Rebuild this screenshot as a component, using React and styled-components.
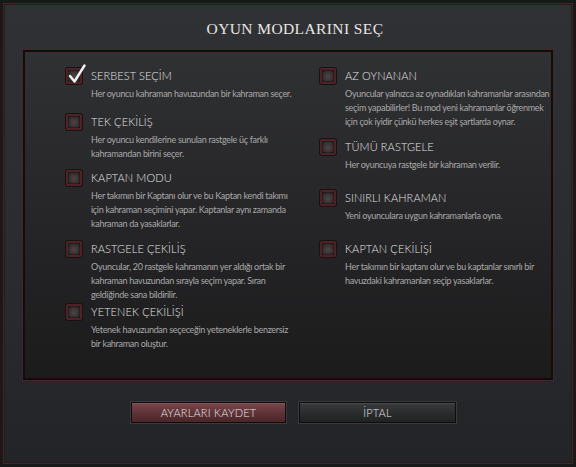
import React from 'react';
import styled, { createGlobalStyle } from 'styled-components';

const GlobalStyle = createGlobalStyle`
  body {
    margin: 0;
    background: #1a1a1b;
    font-family: Lato, "Open Sans", sans-serif;
  }
`;

const Frame = styled.div`
  width: 576px;
  height: 467px;
  box-sizing: border-box;
  padding: 3px;
  background: #19191a;
`;

const Inner = styled.div`
  height: 100%;
  box-sizing: border-box;
  border: 1px solid #4b2327;
  background: linear-gradient(180deg, #303134 0%, #2a2b2e 60%, #232427 100%);
  display: flex;
  flex-direction: column;
  box-shadow: inset 0 0 0 1px #1e1e20;
`;

const Title = styled.h1`
  margin: 0;
  height: 45px;
  display: flex;
  align-items: center;
  justify-content: center;
  padding: 4px 0 0 14px;
  box-sizing: border-box;
  font-family: "Liberation Serif", "DejaVu Serif", serif;
  font-weight: normal;
  font-size: 15.5px;
  letter-spacing: 0.4px;
  color: #e9e7e4;
`;

const Panel = styled.div`
  margin: 0 18px;
  height: 332px;
  box-sizing: border-box;
  border: 1px solid #4a2326;
  box-shadow: inset 0 0 0 2px #0e0e0f;
  background: linear-gradient(180deg, #303133 0%, #262628 50%, #1b1b1c 100%);
  display: grid;
  grid-template-columns: 254px 1fr;
  padding: 18px 0 0 43px;
`;

const Column = styled.div`
  display: flex;
  flex-direction: column;
`;

const Item = styled.div`
  display: grid;
  grid-template-columns: 16px 1fr;
  column-gap: 9px;
  margin-top: ${p => p.$gap || 0}px;
`;

const Box = styled.span`
  position: relative;
  width: 16px;
  height: 16px;
  box-sizing: border-box;
  border: 2px solid #4e2226;
  border-radius: 2px;
  background: radial-gradient(circle at 50% 55%, #4d4445 0%, #2e2728 80%);
  box-shadow: 0 0 0 1px #1a1112, inset 0 0 2px #000;
`;

const Check = styled.svg`
  position: absolute;
  left: 0;
  top: -6px;
`;

const Name = styled.div`
  font-size: 11px;
  font-weight: 300;
  line-height: 16px;
  color: #e2e2e2;
  letter-spacing: 0.1px;
`;

const Desc = styled.p`
  grid-column: 2;
  margin: 3px 0 0;
  font-size: 9px;
  letter-spacing: -0.3px;
  line-height: 14px;
  white-space: nowrap;
  color: #a9a9a9;
`;

const Footer = styled.div`
  flex: 1;
  display: flex;
  justify-content: center;
  align-items: flex-start;
  gap: 13px;
  padding: 21px 0 0 11px;
`;

const Button = styled.button`
  width: ${p => p.$w}px;
  height: 21px;
  border: 1px solid #0d0d0e;
  outline: 1px solid #3a3a3c;
  font-family: Lato, "Open Sans", sans-serif;
  font-size: 11px;
  font-weight: 300;
  color: #e4e4e4;
  letter-spacing: 0.2px;
  padding: 0;
  background: ${p =>
    p.$primary
      ? 'linear-gradient(180deg, #7a474b 0%, #5d3236 55%, #4a2629 100%)'
      : 'linear-gradient(180deg, #3a3b3d 0%, #2a2b2d 55%, #212224 100%)'};
  box-shadow: inset 0 1px 0 rgba(255,255,255,0.08);
`;

const left = [
  { name: 'SERBEST SEÇİM', lines: ['Her oyuncu kahraman havuzundan bir kahraman seçer.'], checked: true },
  { name: 'TEK ÇEKİLİŞ', lines: ['Her oyuncu kendilerine sunulan rastgele üç farklı', 'kahramandan birini seçer.'], gap: 13 },
  { name: 'KAPTAN MODU', lines: ['Her takımın bir Kaptanı olur ve bu Kaptan kendi takımı', 'için kahraman seçimini yapar. Kaptanlar aynı zamanda', 'kahraman da yasaklarlar.'], gap: 9 },
  { name: 'RASTGELE ÇEKİLİŞ', lines: ['Oyuncular, 20 rastgele kahramanın yer aldığı ortak bir', 'kahraman havuzundan sırayla seçim yapar. Sıran', 'geldiğinde sana bildirilir.'], gap: 10 },
  { name: 'YETENEK ÇEKİLİŞİ', lines: ['Yetenek havuzundan seçeceğin yeteneklerle benzersiz', 'bir kahraman oluştur.'], gap: 2 },
];

const right = [
  { name: 'AZ OYNANAN', lines: ['Oyuncular yalnızca az oynadıkları kahramanlar arasından', 'seçim yapabilirler! Bu mod yeni kahramanlar öğrenmek', 'için çok iyidir çünkü herkes eşit şartlarda oynar.'] },
  { name: 'TÜMÜ RASTGELE', lines: ['Her oyuncuya rastgele bir kahraman verilir.'], gap: 10 },
  { name: 'SINIRLI KAHRAMAN', lines: ['Yeni oyunculara uygun kahramanlarla oyna.'], gap: 18 },
  { name: 'KAPTAN ÇEKİLİŞİ', lines: ['Her takımın bir kaptanı olur ve bu kaptanlar sınırlı bir', 'havuzdaki kahramanları seçip yasaklarlar.'], gap: 18 },
];

function Mode({ name, lines, checked, gap }) {
  return (
    <Item $gap={gap}>
      <Box>
        {checked && (
          <Check width="18" height="20" viewBox="0 0 18 20">
            <path d="M2 12 L6.5 17.5 L16.5 1.5" fill="none" stroke="#f2f2f2" strokeWidth="2.4" strokeLinecap="round" strokeLinejoin="round" />
          </Check>
        )}
      </Box>
      <Name>{name}</Name>
      <Desc>
        {lines.map((l, i) => (
          <React.Fragment key={i}>
            {i > 0 && <br />}
            {l}
          </React.Fragment>
        ))}
      </Desc>
    </Item>
  );
}

export default function App() {
  return (
    <Frame>
      <GlobalStyle />
      <Inner>
        <Title>OYUN MODLARINI SEÇ</Title>
        <Panel>
          <Column>
            {left.map(m => <Mode key={m.name} {...m} />)}
          </Column>
          <Column>
            {right.map(m => <Mode key={m.name} {...m} />)}
          </Column>
        </Panel>
        <Footer>
          <Button $primary $w={155}>AYARLARI KAYDET</Button>
          <Button $w={157}>İPTAL</Button>
        </Footer>
      </Inner>
    </Frame>
  );
}
